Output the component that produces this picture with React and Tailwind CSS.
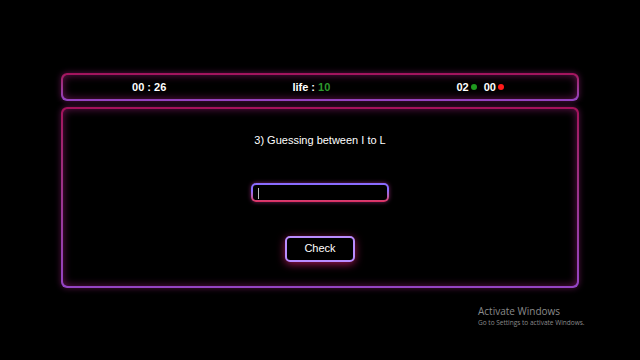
import { useState } from 'react'

function Panel({ className = '', children }) {
  return (
    <div className={`rounded-[6px] bg-gradient-to-b from-[#a3105a] to-[#9444c4] p-[2px] shadow-[0_0_6px_rgba(170,40,140,0.5)] ${className}`}>
      <div className="h-full rounded-[5px] bg-black shadow-[inset_0_0_9px_rgba(180,35,140,0.55)]">
        {children}
      </div>
    </div>
  )
}

export default function App() {
  const [guess, setGuess] = useState('')

  return (
    <div className="relative h-[360px] w-[640px] overflow-hidden bg-black px-[61px] pt-[73px] font-['Liberation_Sans',Arial,sans-serif] text-white">
      {/* Status bar */}
      <Panel className="h-[28px]">
        <div className="flex h-full items-center justify-around pl-[6px] pr-[10px] text-[11px] font-bold">
          <span>00 : 26</span>
          <span>
            life : <span className="text-[#2e9a2e]">10</span>
          </span>
          <span className="flex items-center">
            02
            <span className="ml-[2px] mr-[7px] inline-block h-[6px] w-[6px] rounded-full bg-[#1f9a1f]" />
            00
            <span className="ml-[2px] inline-block h-[6px] w-[6px] rounded-full bg-[#ff1a1a]" />
          </span>
        </div>
      </Panel>

      {/* Game panel */}
      <Panel className="mt-[6px] h-[181px]">
        <div className="flex h-full flex-col items-center pt-[23px]">
          <p className="text-[11px]">3) Guessing between I to L</p>
          <div className="relative mt-[34px] rounded-[5px] bg-gradient-to-b from-[#8a6cff] from-40% to-[#e0285a] p-[2px] shadow-[0_0_4px_rgba(200,60,160,0.6)]">
            <input
              value={guess}
              onChange={(e) => setGuess(e.target.value)}
              className="block h-[15px] w-[134px] rounded-[3px] bg-black px-[4px] text-[11px] text-white outline-none"
            />
            {guess === '' && (
              <span className="pointer-events-none absolute left-[7px] top-[5px] h-[11px] w-px bg-[#bdbdbd]" />
            )}
          </div>
          <button className="mt-[34px] h-[26px] w-[70px] rounded-[5px] border-2 border-[#b98cff] bg-black text-[11px] text-white shadow-[0_2px_8px_rgba(210,30,110,0.75)]">
            Check
          </button>
        </div>
      </Panel>

      {/* Windows watermark */}
      <div className="absolute left-[478px] top-[305px] font-['Open_Sans',sans-serif] text-[#8a8a8a]">
        <p className="text-[10px] leading-[12px]">Activate Windows</p>
        <p className="mt-[1px] text-[6.5px] leading-[9px]">Go to Settings to activate Windows.</p>
      </div>
    </div>
  )
}
